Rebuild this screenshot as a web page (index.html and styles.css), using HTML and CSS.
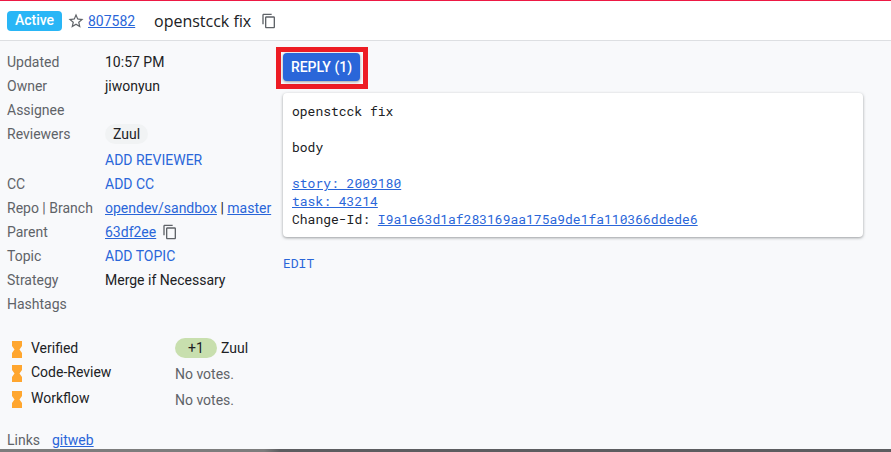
FILE: index.html
```html
<!DOCTYPE html>
<html lang="en">
<head>
<meta charset="utf-8">
<title>openstcck fix</title>
<link rel="stylesheet" href="styles.css">
</head>
<body>
<svg class="defs" width="0" height="0">
  <symbol id="copy" viewBox="0 0 24 24"><path d="M16 1H4c-1.1 0-2 .9-2 2v14h2V3h12V1zm3 4H8c-1.1 0-2 .9-2 2v14c0 1.1.9 2 2 2h11c1.1 0 2-.9 2-2V7c0-1.1-.9-2-2-2zm0 16H8V7h11v14z"/></symbol>
  <symbol id="hourglass" viewBox="0 0 10 17"><path d="M0 0h10v5L7.500 8.500 10 12V17H0v-5L2.500 8.500 0 5z"/></symbol>
</svg>
<header class="header">
  <span class="status">Active</span>
  <svg class="star" viewBox="0 0 24 24"><path d="M22 9.240l-7.190-.62L12 2 9.190 8.630 2 9.240l5.460 4.730L5.820 21 12 17.270 18.180 21l-1.630-7.030L22 9.240zM12 15.400l-3.760 2.270 1-4.280-3.320-2.880 4.380-.38L12 6.100l1.710 4.040 4.380.38-3.320 2.880 1 4.280L12 15.400z"/></svg>
  <a class="number" href="#">807582</a>
  <span class="title">openstcck fix</span>
  <svg class="copy"><use href="#copy"/></svg>
</header>
<main class="content">
  <section class="meta">
    <div class="row"><span class="name">Updated</span><span>10:57 PM</span></div>
    <div class="row"><span class="name">Owner</span><span>jiwonyun</span></div>
    <div class="row"><span class="name">Assignee</span></div>
    <div class="row reviewers"><span class="name">Reviewers</span><span class="chip">Zuul</span></div>
    <div class="row"><span class="name"></span><span class="action">ADD REVIEWER</span></div>
    <div class="row"><span class="name">CC</span><span class="action">ADD CC</span></div>
    <div class="row"><span class="name">Repo | Branch</span><span><a href="#">opendev/sandbox</a> | <a href="#">master</a></span></div>
    <div class="row"><span class="name">Parent</span><a href="#">63df2ee</a><svg class="copy"><use href="#copy"/></svg></div>
    <div class="row"><span class="name">Topic</span><span class="action">ADD TOPIC</span></div>
    <div class="row"><span class="name">Strategy</span><span>Merge if Necessary</span></div>
    <div class="row"><span class="name">Hashtags</span></div>
    <div class="labels">
      <div class="label"><svg class="wait"><use href="#hourglass"/></svg><span class="label-name">Verified</span><span class="vote">+1</span><span>Zuul</span></div>
      <div class="label review"><svg class="wait"><use href="#hourglass"/></svg><span class="label-name">Code-Review</span><span class="none">No votes.</span></div>
      <div class="label"><svg class="wait"><use href="#hourglass"/></svg><span class="label-name">Workflow</span><span class="none">No votes.</span></div>
    </div>
    <div class="links"><span>Links</span><a href="#">gitweb</a></div>
  </section>
  <section class="main">
    <div class="highlight"><button class="reply">REPLY (1)</button></div>
    <div class="message">openstcck fix

body

<a href="#">story: 2009180</a>
<a href="#">task: 43214</a>
Change-Id: <a href="#">I9a1e63d1af283169aa175a9de1fa110366ddede6</a></div>
    <div class="edit">EDIT</div>
  </section>
</main>
<footer class="footer"></footer>
</body>
</html>
```
FILE: styles.css
```css
* { box-sizing: border-box; }
body {
  margin: 0;
  height: 452px;
  overflow: hidden;
  display: flex;
  flex-direction: column;
  background: #f8f9fb;
  color: #202124;
  font: 14px/24px Roboto, sans-serif;
}
.defs { display: none; }
a { color: #2a66d9; text-decoration: underline; }
svg { fill: #5f6368; flex: none; }
.header {
  display: flex;
  align-items: center;
  height: 41px;
  flex: none;
  padding-left: 7px;
  background: #fff;
  border-top: 1px solid #ed1944;
  border-bottom: 1px solid #dddfe2;
}
.status {
  width: 55px;
  height: 20px;
  line-height: 19px;
  text-align: center;
  border-radius: 4px;
  background: #29b6f6;
  color: #fff;
  font-weight: 500;
}
.star { width: 18px; height: 18px; margin: 0 3px 0 5px; }
.number { width: 66px; }
.title { width: 97px; font: 16px/24px "Open Sans", sans-serif; white-space: nowrap; }
.copy { width: 16px; height: 16px; }
.header .copy { margin-left: 10px; }
.content { display: flex; flex: 1; min-height: 0; }
.meta { width: 276px; padding: 9px 0 0 7px; flex: none; white-space: nowrap; }
.row { display: flex; align-items: center; height: 24px; }
.name { width: 98px; flex: none; color: #5f6368; }
.row .copy { margin-left: 6px; }
.action { color: #2a66d9; }
.reviewers { height: 26px; align-items: flex-start; }
.chip {
  height: 20px;
  margin-top: 2px;
  padding: 0 8px;
  line-height: 20px;
  border-radius: 10px;
  background: #f1f3f4;
}
.labels { margin-top: 20px; }
.label { display: flex; height: 24px; align-items: flex-start; }
.review { height: 26px; }
.wait { width: 10px; height: 17px; margin: 5px 9px 0 5px; fill: #ffa62f; }
.label-name { width: 144px; }
.vote {
  width: 42px;
  height: 20px;
  margin: 2px 4px 0 0;
  line-height: 20px;
  text-align: center;
  border-radius: 10px;
  background: #c8dfae;
}
.none { margin-top: 2px; color: #5f6368; }
.links { display: flex; gap: 12px; margin-top: 18px; color: #5f6368; }
.main { width: 588px; padding-top: 6px; }
.highlight {
  width: 92px;
  height: 42px;
  padding: 1px 2px;
  border: 5px solid #ed1c24;
}
.reply {
  display: block;
  width: 77px;
  height: 28px;
  padding: 0 0 1px;
  border: 0;
  border-radius: 4px;
  background: #2a66d9;
  color: #fff;
  font: 500 14px/26px Roboto, sans-serif;
  box-shadow: 0 1px 3px rgba(60, 64, 67, .5);
}
.message {
  width: 580px;
  height: 144px;
  margin: 4px 0 0 7px;
  padding: 9px;
  background: #fff;
  border-radius: 4px;
  box-shadow: 0 1px 3px rgba(60, 64, 67, .5);
  font: 13px/18px "Roboto Mono", "Liberation Mono", monospace;
  white-space: pre;
}
.edit {
  margin: 14px 0 0 7px;
  color: #2a66d9;
  font: 13px/24px "Roboto Mono", "Liberation Mono", monospace;
}
.footer {
  height: 3px;
  flex: none;
  background: linear-gradient(to right, #7d7d7d 0, #7d7d7d 264px, #5c5d60 280px);
}
```
